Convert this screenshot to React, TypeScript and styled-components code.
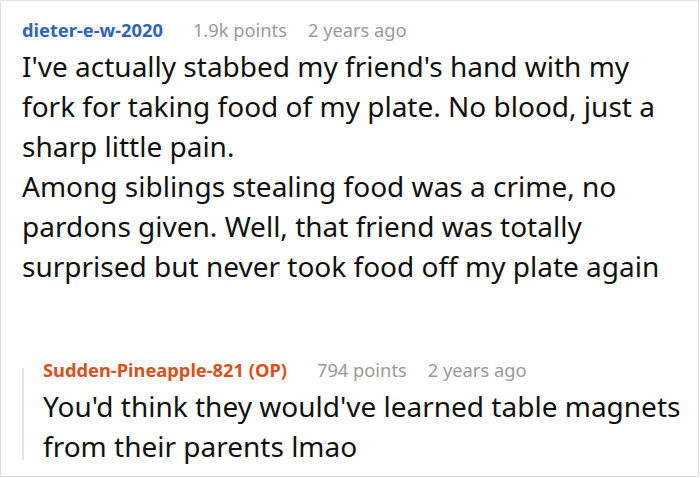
import styled, { createGlobalStyle } from "styled-components";

const GlobalStyle = createGlobalStyle`
  html, body {
    margin: 0;
    padding: 0;
    background: #fff;
  }
  body {
    font-family: "Noto Sans", "Open Sans", sans-serif;
  }
`;

const Frame = styled.div`
  width: 699px;
  height: 477px;
  box-sizing: border-box;
  border: 1px solid #e0e0e0;
  padding: 17px 16px 0 21px;
  background: #fff;
`;

const Comment = styled.div`
  display: flex;
  flex-direction: column;
  gap: 4px;
`;

const Meta = styled.div`
  display: flex;
  align-items: baseline;
  gap: 21px;
  font-size: 18.3px;
  line-height: 24px;
`;

const Author = styled.span<{ $op?: boolean }>`
  font-weight: 700;
  color: ${(p) => (p.$op ? "#d6521d" : "#2f64b6")};
  margin-right: 9px;
`;

const Info = styled.span`
  color: #999;
`;

const Body = styled.p`
  margin: 0;
  font-size: 28px;
  line-height: 40px;
  color: #111;
`;

const Reply = styled(Comment)`
  position: relative;
  margin-top: 72px;
  padding-left: 21px;

  &::before {
    content: "";
    position: absolute;
    left: 0;
    top: 10px;
    bottom: 6px;
    width: 2px;
    background: #e4e4e4;
  }
`;

export default function App() {
  return (
    <>
      <GlobalStyle />
      <Frame>
        <Comment>
          <Meta>
            <Author>dieter-e-w-2020</Author>
            <Info>1.9k points</Info>
            <Info>2 years ago</Info>
          </Meta>
          <Body>
            I've actually stabbed my friend's hand with my fork for taking food
            of my plate. No blood, just a sharp little pain.
            <br />
            Among siblings stealing food was a crime, no pardons given. Well,
            that friend was totally surprised but never took food off my plate
            again
          </Body>
        </Comment>
        <Reply>
          <Meta>
            <Author $op>Sudden-Pineapple-821 (OP)</Author>
            <Info>794 points</Info>
            <Info>2 years ago</Info>
          </Meta>
          <Body>
            You'd think they would've learned table magnets from their parents
            lmao
          </Body>
        </Reply>
      </Frame>
    </>
  );
}
